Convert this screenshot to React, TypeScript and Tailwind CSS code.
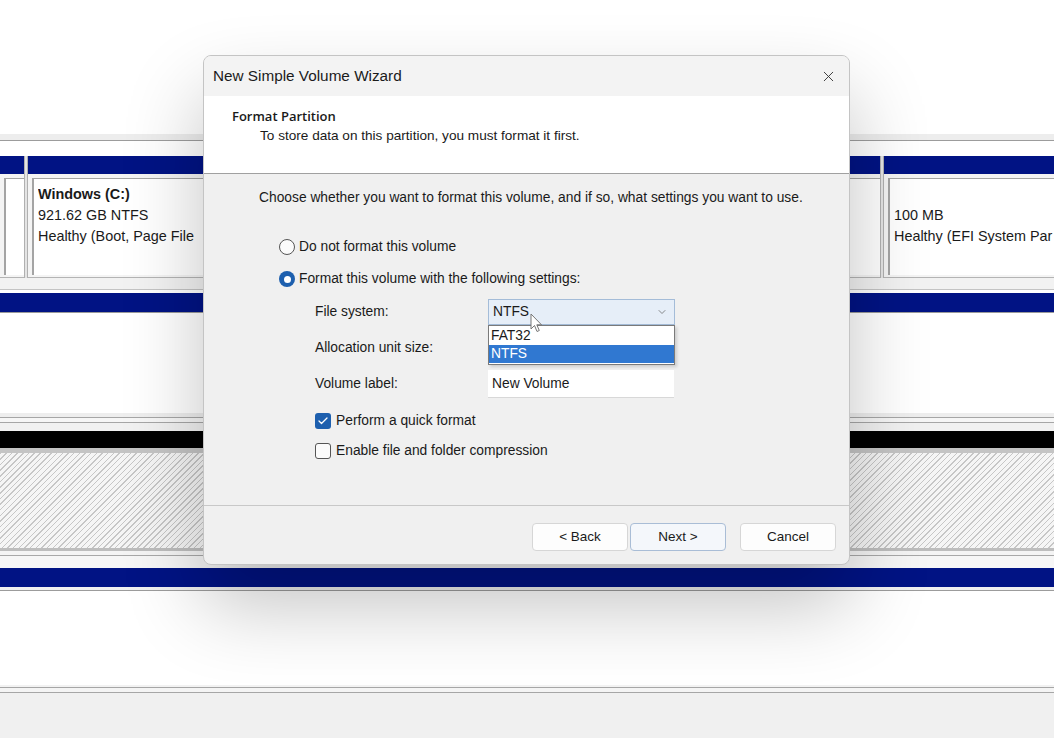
import { X, ChevronDown, Check } from "lucide-react";

const ui = "font-['Liberation_Sans',Arial,sans-serif]";

function BlueBar({ className = "" }: { className?: string }) {
  return <div className={`h-[18px] bg-[#011384] ${className}`} />;
}

function Partition({
  lines,
  bold,
  className = "",
  textWidth = "",
}: {
  lines: string[];
  bold?: string;
  className?: string;
  textWidth?: string;
}) {
  return (
    <div className={`flex flex-col ${className}`}>
      <BlueBar />
      <div className="flex-1 bg-[#f4f4f4] pt-[4px] pl-[4px] pb-[2px] border-b border-[#b4b4b4] overflow-hidden">
        <div className="h-full bg-white border-l-2 border-t border-[#a4a4a4] pl-[4px] pt-[5px] whitespace-nowrap overflow-hidden text-[14.4px] leading-[21px] text-[#1a1a1a]">
          <div className={`overflow-hidden ${textWidth}`}>
            {bold && <div className="font-bold">{bold}</div>}
            {lines.map((l) => (
              <div key={l}>{l}</div>
            ))}
          </div>
        </div>
      </div>
    </div>
  );
}

function ColumnGap() {
  return <div className="w-[4px] bg-[#e4e4e4] border-x border-[#b0b0b0]" />;
}

function Radio({ checked, label }: { checked?: boolean; label: string }) {
  return (
    <div className="flex items-center h-[20px] gap-[4px]">
      {checked ? (
        <span className="w-[16px] h-[16px] rounded-full bg-[#1d5fae] flex items-center justify-center">
          <span className="w-[7px] h-[7px] rounded-full bg-white" />
        </span>
      ) : (
        <span className="w-[16px] h-[16px] rounded-full border border-[#555] bg-[#fbfbfb]" />
      )}
      <span>{label}</span>
    </div>
  );
}

function CheckRow({ checked, label }: { checked?: boolean; label: string }) {
  return (
    <div className="flex items-center h-[20px] gap-[5px]">
      {checked ? (
        <span className="w-[16px] h-[16px] rounded-[3px] bg-[#1d5fae] flex items-center justify-center">
          <Check className="w-[12px] h-[12px] text-white" strokeWidth={2.5} />
        </span>
      ) : (
        <span className="w-[16px] h-[16px] rounded-[3px] border border-[#555] bg-[#fbfbfb]" />
      )}
      <span>{label}</span>
    </div>
  );
}

function Button({ label, primary }: { label: string; primary?: boolean }) {
  return (
    <button
      className={`w-[96px] h-[28px] rounded-[4px] text-[13.5px] text-[#1a1a1a] border ${
        primary
          ? "bg-[#f4f7fb] border-[#a9bdd6]"
          : "bg-[#fdfdfd] border-[#d6d6d6]"
      }`}
    >
      {label}
    </button>
  );
}

export default function App() {
  return (
    <div className={`relative w-[1054px] h-[738px] overflow-hidden bg-white ${ui}`}>
      {/* disk management view behind the wizard */}
      <div className="flex flex-col h-full">
        <div className="h-[134px] bg-white" />
        <div className="h-[6px] bg-[#ededed]" />
        <div className="h-px bg-[#9c9c9c]" />
        <div className="h-[15px] bg-white" />

        <div className="flex h-[122px]">
          <Partition lines={[]} className="w-[24px]" />
          <ColumnGap />
          <Partition
            bold="Windows  (C:)"
            lines={["921.62 GB NTFS", "Healthy (Boot, Page File"]}
            className="flex-1"
            textWidth="w-[166px]"
          />
          <ColumnGap />
          <div className="w-[170px]">
            <div className="flex flex-col h-full">
              <BlueBar />
              <div className="flex-1 bg-[#f4f4f4] pt-[4px] pl-[4px] pb-[2px] border-b border-[#b4b4b4] overflow-hidden">
                <div className="h-full bg-white border-l-2 border-t border-[#a4a4a4] pl-[4px] pt-[26px] whitespace-nowrap overflow-hidden text-[14.4px] leading-[21px] text-[#1a1a1a]">
                  <div>100 MB</div>
                  <div>Healthy (EFI System Par</div>
                </div>
              </div>
            </div>
          </div>
        </div>

        <div className="h-[12px] bg-[#f2f2f2] border-b border-[#c4c4c4]" />
        <div className="h-[3px] bg-white" />
        <BlueBar className="h-[19px]" />
        <div className="h-px bg-[#9a9a9a]" />
        <div className="h-[100px] bg-white" />
        <div className="h-[5px] bg-[#eeeeee] border-b border-[#a6a6a6]" />
        <div className="h-[5px] bg-[#f6f6f6] border-b border-[#a6a6a6]" />
        <div className="h-[8px] bg-[#f1f1f1]" />

        <div className="h-[17px] bg-black" />
        <div className="h-[5px] bg-[#c4c4c4]" />
        <div className="h-[95px] bg-[repeating-linear-gradient(135deg,#c6c6c6_0px,#c6c6c6_1px,#f5f5f5_1px,#f5f5f5_4px)]" />
        <div className="h-[3px] bg-[#bdbdbd]" />
        <div className="h-[5px] bg-[#f4f4f4] border-b border-[#a8a8a8]" />
        <div className="h-[12px] bg-[#f6f6f6]" />

        <BlueBar className="h-[19px]" />
        <div className="h-[4px] bg-[#f0f0f0] border-b border-[#9c9c9c]" />
        <div className="h-[94px] bg-white" />
        <div className="h-[3px] bg-[#f2f2f2] border-b border-[#a6a6a6]" />
        <div className="h-[5px] bg-[#f4f4f4] border-b border-[#a6a6a6]" />
        <div className="flex-1 bg-[#f0f0f0]" />
      </div>

      {/* New Simple Volume Wizard dialog */}
      <div className="absolute left-[203px] top-[55px] w-[647px] h-[510px] rounded-[8px] border border-[#c4c4c4] bg-[#f0f0f0] overflow-hidden shadow-[0_40px_80px_rgba(0,0,0,0.24)] text-[13.8px] text-[#1a1a1a] flex flex-col">
        <div className="h-[40px] bg-[#f3f3f3] flex items-center justify-between pl-[9px] pr-[12px]">
          <span className="text-[15.3px] text-[#1b1b1b]">New Simple Volume Wizard</span>
          <X className="w-[17px] h-[17px] text-[#333]" strokeWidth={1.3} />
        </div>

        <div className="h-[78px] bg-white border-b border-[#a0a0a0] pt-[12px]">
          <div className="pl-[28px] font-['Open_Sans',sans-serif] font-semibold text-[13px] leading-[17px]">
            Format Partition
          </div>
          <div className="pl-[56px] pt-[3px] text-[13.6px] leading-[16px]">
            To store data on this partition, you must format it first.
          </div>
        </div>

        <div className="h-[332px] pt-[16px] pl-[55px] leading-[16px] border-b border-[#c8c8c8]">
          <p>Choose whether you want to format this volume, and if so, what settings you want to use.</p>

          <div className="pl-[20px] pt-[31px] flex flex-col gap-[12px]">
            <Radio label="Do not format this volume" />
            <Radio checked label="Format this volume with the following settings:" />
          </div>

          <div className="pl-[56px] pt-[9px] flex flex-col gap-[8px]">
            <div className="flex items-center h-[28px]">
              <span className="w-[173px]">File system:</span>
              <div className="relative">
                <div className="w-[187px] h-[26px] bg-[#e6eef8] border border-[#a4bcd8] flex items-center justify-between pl-[4px] pr-[6px]">
                  <span>NTFS</span>
                  <ChevronDown className="w-[12px] h-[12px] text-[#666]" strokeWidth={1.5} />
                </div>
                <div className="absolute left-0 top-[26px] w-[187px] bg-white border border-[#7a7a7a] shadow-[2px_2px_3px_rgba(0,0,0,0.15)] z-10 py-px">
                  <div className="h-[18px] flex items-center pl-[2px]">FAT32</div>
                  <div className="h-[18px] flex items-center pl-[2px] bg-[#3078d1] text-white">NTFS</div>
                </div>
                <svg
                  className="absolute left-[42px] top-[14px] z-20"
                  width="13"
                  height="20"
                  viewBox="0 0 13 20"
                >
                  <path
                    d="M1 1 L1 16 L4.5 12.5 L7 18.5 L9.3 17.5 L6.8 11.8 L11.5 11.8 Z"
                    fill="#fff"
                    stroke="#777"
                    strokeWidth="1"
                    strokeLinejoin="round"
                  />
                </svg>
              </div>
            </div>
            <div className="flex items-center h-[28px]">
              <span className="w-[173px]">Allocation unit size:</span>
            </div>
            <div className="flex items-center h-[28px]">
              <span className="w-[173px]">Volume label:</span>
              <div className="w-[186px] h-[28px] bg-white border-b border-[#d8d8d8] flex items-center pl-[4px]">
                New Volume
              </div>
            </div>
          </div>

          <div className="pl-[56px] pt-[13px] flex flex-col gap-[10px]">
            <CheckRow checked label="Perform a quick format" />
            <CheckRow label="Enable file and folder compression" />
          </div>
        </div>

        <div className="flex-1 flex items-start justify-end pt-[17px] pr-[13px]">
          <div className="flex gap-[2px]">
            <Button label="< Back" />
            <Button primary label="Next >" />
          </div>
          <div className="ml-[14px]">
            <Button label="Cancel" />
          </div>
        </div>
      </div>
    </div>
  );
}
